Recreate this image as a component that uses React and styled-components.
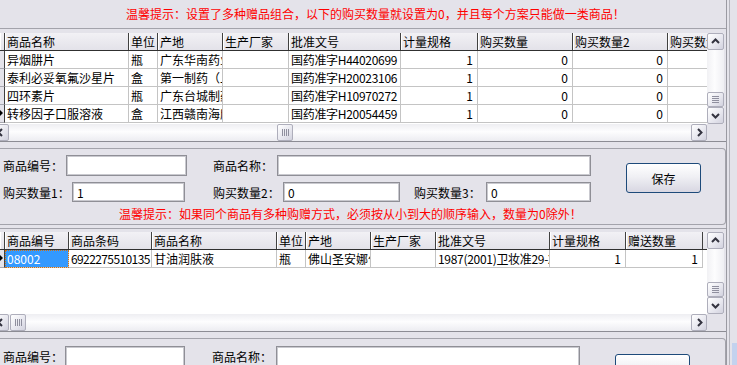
import React from 'react'
import styled, { createGlobalStyle } from 'styled-components'

const GlobalStyle = createGlobalStyle`
  html, body {
    margin: 0;
    padding: 0;
    background: #e4e3ea;
  }
  body {
    font-family: "Noto Sans CJK SC", "Liberation Sans", sans-serif;
    font-size: 12px;
    color: #000;
  }
`

const Window = styled.div`
  width: 737px;
  height: 365px;
  overflow: hidden;
  display: flex;
  background: #e4e3ea;
`
const Main = styled.div`
  width: 726px;
  flex: none;
  display: flex;
  flex-direction: column;
`
const RightEdge = styled.div`
  flex: 1;
  display: flex;
  border-left: 1px solid #9a9aa2;
`
const EdgeLine = styled.div`
  margin-left: 2px;
  width: 1px;
  background: #b4b4bc;
`
const EdgeStrip = styled.div`
  flex: 1;
  display: flex;
  flex-direction: column;
  justify-content: flex-end;
`
const EdgeBlue = styled.div`
  height: 22px;
  margin-left: 2px;
  background: #c3d2ee;
`

const Hint = styled.div`
  color: #ff0000;
  white-space: nowrap;
  line-height: 14px;
  height: 14px;
  padding-left: ${p => p.$left}px;
`
const HintBar = styled.div`
  flex: none;
  height: 28px;
  display: flex;
  align-items: center;
  border-bottom: 1px solid #a3a3ab;
`

const GridPanel = styled.div`
  flex: none;
  padding-top: ${p => p.$pad}px;
  margin-top: ${p => p.$mt}px;
  border-top: ${p => (p.$topLine ? '1px solid #a3a3ab' : 'none')};
  border-bottom: 1px solid #8c8c94;
`
const GridFrame = styled.div`
  display: grid;
  grid-template-columns: 707px 18px;
  grid-template-rows: ${p => p.$bodyH}px 17px;
`
const Table = styled.div`
  overflow: hidden;
  background: #fff;
  display: flex;
  flex-direction: column;
`
const HeaderRow = styled.div`
  display: flex;
  height: 18px;
  flex: none;
  box-sizing: border-box;
  border-bottom: 1px solid #303030;
  background: linear-gradient(#f2f1f5, #e3e2e9);
`
const HeadCell = styled.div`
  flex: none;
  width: ${p => p.$w}px;
  box-sizing: border-box;
  border-right: 1px solid #404040;
  box-shadow: inset 1px 0 #ffffff;
  padding-left: 2px;
  line-height: 17px;
  white-space: nowrap;
  overflow: hidden;
`
const DataRow = styled.div`
  display: flex;
  height: 18px;
  flex: none;
`
const Indicator = styled.div`
  flex: none;
  position: relative;
  width: 5px;
  box-sizing: border-box;
  background: #e4e3ea;
  border-right: 1px solid #404040;
  border-bottom: 1px solid #a8a8b0;

  &::after {
    content: '';
    display: ${p => (p.$current ? 'block' : 'none')};
    position: absolute;
    left: 0;
    top: 5px;
    border-left: 3px solid #000;
    border-top: 3px solid transparent;
    border-bottom: 3px solid transparent;
  }
`
const Cell = styled.div`
  flex: none;
  width: ${p => p.$w}px;
  box-sizing: border-box;
  border-right: 1px solid #c4c4c4;
  border-bottom: 1px solid #c4c4c4;
  padding: 0 ${p => (p.$right ? 4 : 1)}px 0 2px;
  text-align: ${p => (p.$right ? 'right' : 'left')};
  letter-spacing: ${p => p.$ls || 0}px;
  line-height: 17px;
  white-space: nowrap;
  overflow: hidden;
  background: ${p => (p.$selected ? '#3399ff' : 'transparent')};
  color: ${p => (p.$selected ? '#fff' : '#000')};
  outline: ${p => (p.$selected ? '1px dotted #d07010' : 'none')};
  outline-offset: -1px;
`

const VScroll = styled.div`
  grid-row: 1;
  grid-column: 2;
  width: 17px;
  display: flex;
  flex-direction: column;
  background: linear-gradient(to right, #f1f1f4, #fdfdfe 45%, #efeff3);
`
const VTrack = styled.div`
  flex: 1;
  display: flex;
  flex-direction: column;
  justify-content: flex-end;
`
const HScroll = styled.div`
  grid-row: 2;
  grid-column: 1;
  display: flex;
  overflow: hidden;
  background: linear-gradient(#eeeef2, #fdfdfe 45%, #ececf1);
`
const HTrack = styled.div`
  flex: 1;
  display: flex;
`
const ScrollBtn = styled.div`
  flex: none;
  width: ${p => p.$w || 17}px;
  height: ${p => p.$h || 17}px;
  margin-left: ${p => p.$ml || 0}px;
  box-sizing: border-box;
  border: 1px solid #aeaebb;
  border-radius: 2px;
  background: linear-gradient(135deg, #ffffff, #e6e6ee 60%, #d2d2de);
  display: flex;
  align-items: center;
  justify-content: center;
`
const Thumb = styled(ScrollBtn)`
  margin-left: ${p => p.$offset || 0}px;
`

const Chevron = ({ dir }) => {
  const pts = {
    up: '1,6 4.5,2.5 8,6',
    down: '1,3 4.5,6.5 8,3',
    left: '6,1 2.5,4.5 6,8',
    right: '3,1 6.5,4.5 3,8',
  }[dir]
  return (
    <svg width="9" height="9" viewBox="0 0 9 9">
      <polyline points={pts} fill="none" stroke="#33333f" strokeWidth="2" />
    </svg>
  )
}

const Grip = ({ vertical }) =>
  vertical ? (
    <svg width="7" height="7" viewBox="0 0 7 7">
      {[0, 2, 4, 6].map(y => (
        <rect key={y} x="0" y={y} width="7" height="1" fill="#8f8f9e" />
      ))}
    </svg>
  ) : (
    <svg width="7" height="7" viewBox="0 0 7 7">
      {[0, 2, 4, 6].map(x => (
        <rect key={x} x={x} y="0" width="1" height="7" fill="#8f8f9e" />
      ))}
    </svg>
  )

const DataGrid = ({ cols, rows, current, selected, bodyH, hThumb, pad, mt, topLine }) => (
  <GridPanel $pad={pad} $mt={mt} $topLine={topLine}>
    <GridFrame $bodyH={bodyH}>
      <Table>
        <HeaderRow>
          <HeadCell $w={5} />
          {cols.map(c => (
            <HeadCell key={c.t} $w={c.w}>{c.t}</HeadCell>
          ))}
        </HeaderRow>
        {rows.map((r, i) => (
          <DataRow key={i}>
            <Indicator $current={i === current} />
            {cols.map((c, j) => (
              <Cell
                key={j}
                $w={c.w}
                $right={c.r}
                $ls={c.ls}
                $selected={selected && selected[0] === i && selected[1] === j}
              >
                {r[j]}
              </Cell>
            ))}
          </DataRow>
        ))}
      </Table>
      <VScroll>
        <ScrollBtn><Chevron dir="up" /></ScrollBtn>
        <VTrack>
          <ScrollBtn $h={15}><Grip vertical /></ScrollBtn>
        </VTrack>
        <ScrollBtn><Chevron dir="down" /></ScrollBtn>
      </VScroll>
      <HScroll>
        <ScrollBtn $ml={-8}><Chevron dir="left" /></ScrollBtn>
        <HTrack>
          <Thumb $w={16} $offset={hThumb}><Grip /></Thumb>
        </HTrack>
        <ScrollBtn $w={16}><Chevron dir="right" /></ScrollBtn>
      </HScroll>
    </GridFrame>
  </GridPanel>
)

const FormPanel = styled.div`
  margin-top: ${p => p.$mt}px;
  box-sizing: border-box;
  width: 726px;
  border: 1px solid #a3a3ab;
  border-left: none;
  border-radius: 0 4px 4px 0;
  display: flex;
  flex: none;
`
const FormBody = styled.div`
  display: flex;
  flex-direction: column;
  padding: ${p => p.$pt}px 0 3px 3px;
`
const FieldRow = styled.div`
  display: flex;
  align-items: center;
  height: ${p => p.$h}px;
  margin-bottom: ${p => p.$mb || 0}px;
`
const Label = styled.span`
  flex: none;
  width: ${p => p.$w}px;
  margin-left: ${p => p.$ml || 0}px;
  white-space: nowrap;
`
const Input = styled.div`
  flex: none;
  width: ${p => p.$w}px;
  height: 100%;
  box-sizing: border-box;
  border: 1px solid #8f8f96;
  box-shadow: inset 0 0 0 1px #c9c9cf;
  background: #fff;
  padding-left: 4px;
  line-height: 19px;
`
const SaveButton = styled.div`
  flex: none;
  margin: ${p => p.$mt}px ${p => p.$mr}px 0 auto;
  width: 75px;
  height: 30px;
  box-sizing: border-box;
  border: 1px solid #1d4a7a;
  border-radius: 3px;
  background: linear-gradient(#ffffff, #f0f0f4 45%, #d8d7e2);
  display: flex;
  align-items: center;
  justify-content: center;
`

const cols1 = [
  { t: '商品名称', w: 124 },
  { t: '单位', w: 29 },
  { t: '产地', w: 65 },
  { t: '生产厂家', w: 66 },
  { t: '批准文号', w: 112, ls: -0.3 },
  { t: '计量规格', w: 77, r: true },
  { t: '购买数量', w: 95, r: true },
  { t: '购买数量2', w: 95, r: true },
  { t: '购买数量3', w: 95, r: true },
]
const rows1 = [
  ['异烟肼片', '瓶', '广东华南药业', '', '国药准字H44020699', '1', '0', '0', '0'],
  ['泰利必妥氧氟沙星片', '盒', '第一制药（上海）', '', '国药准字H20023106', '1', '0', '0', '0'],
  ['四环素片', '瓶', '广东台城制药', '', '国药准字H10970272', '1', '0', '0', '0'],
  ['转移因子口服溶液', '盒', '江西赣南海欣', '', '国药准字H20054459', '1', '0', '0', '0'],
]
const cols2 = [
  { t: '商品编号', w: 64 },
  { t: '商品条码', w: 83, ls: -0.6 },
  { t: '商品名称', w: 125 },
  { t: '单位', w: 29 },
  { t: '产地', w: 65 },
  { t: '生产厂家', w: 65 },
  { t: '批准文号', w: 114, ls: -0.3 },
  { t: '计量规格', w: 76, r: true },
  { t: '赠送数量', w: 77, r: true },
]
const rows2 = [
  ['08002', '6922275510135', '甘油润肤液', '瓶', '佛山圣安娜化妆品', '', '1987(2001)卫妆准29-XK-0022', '1', '1'],
]

export default function App() {
  return (
    <Window>
      <GlobalStyle />
      <Main>
        <HintBar>
          <Hint $left={126}>温馨提示：设置了多种赠品组合，以下的购买数量就设置为0，并且每个方案只能做一类商品！</Hint>
        </HintBar>
        <DataGrid cols={cols1} rows={rows1} current={3} bodyH={91} hThumb={268} pad={4} mt={0} />
        <FormPanel $mt={6}>
          <FormBody $pt={6}>
            <FieldRow $h={21} $mb={6}>
              <Label $w={63}>商品编号：</Label>
              <Input $w={121} />
              <Label $w={64} $ml={26}>商品名称：</Label>
              <Input $w={314} />
            </FieldRow>
            <FieldRow $h={20} $mb={5}>
              <Label $w={69}>购买数量1：</Label>
              <Input $w={113}>1</Input>
              <Label $w={70} $ml={28}>购买数量2：</Label>
              <Input $w={117}>0</Input>
              <Label $w={72} $ml={14}>购买数量3：</Label>
              <Input $w={105}>0</Input>
            </FieldRow>
            <Hint $left={116}>温馨提示：如果同个商品有多种购赠方式，必须按从小到大的顺序输入，数量为0除外！</Hint>
          </FormBody>
          <SaveButton $mt={14} $mr={24}>保存</SaveButton>
        </FormPanel>
        <DataGrid cols={cols2} rows={rows2} current={0} selected={[0, 0]} bodyH={82} hThumb={1} pad={3} mt={3} topLine />
        <FormPanel $mt={6}>
          <FormBody $pt={7}>
            <FieldRow $h={21}>
              <Label $w={62}>商品编号：</Label>
              <Input $w={120} />
              <Label $w={64} $ml={27}>商品名称：</Label>
              <Input $w={304} />
            </FieldRow>
          </FormBody>
          <SaveButton $mt={15} $mr={35} />
        </FormPanel>
      </Main>
      <RightEdge>
        <EdgeLine />
        <EdgeStrip>
          <EdgeBlue />
        </EdgeStrip>
      </RightEdge>
    </Window>
  )
}
